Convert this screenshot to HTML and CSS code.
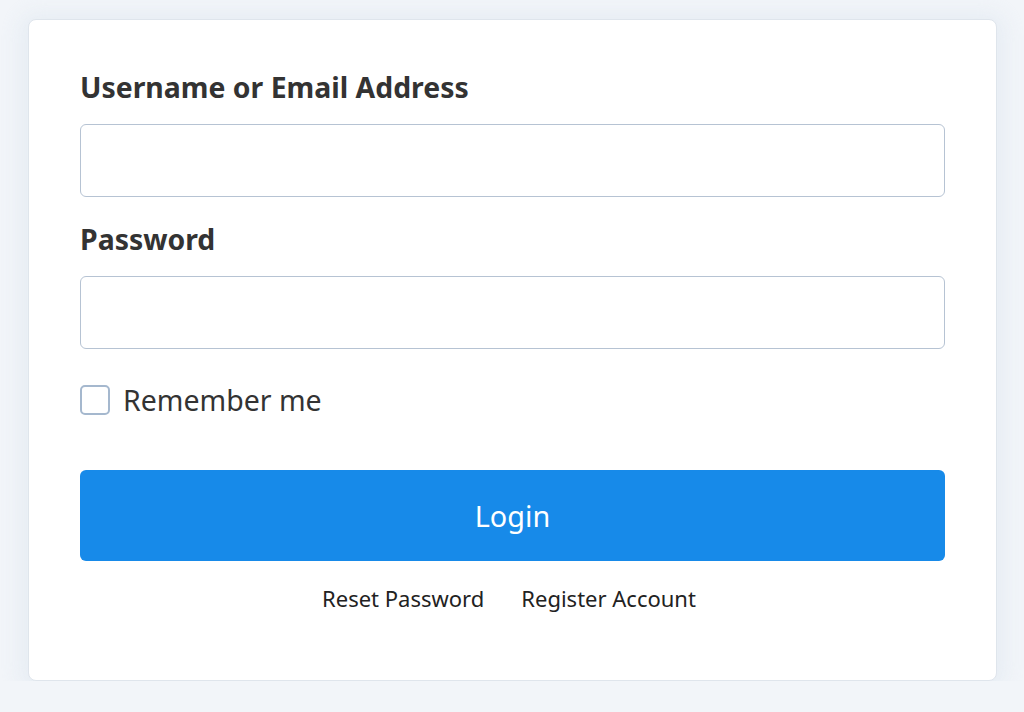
FILE: index.html
```html
<!DOCTYPE html>
<html lang="en">
<head>
    <meta charset="UTF-8">
    <meta name="viewport" content="width=device-width, initial-scale=1.0">
    <title>Log In</title>
    <link rel="stylesheet" href="styles.css">
</head>
<body>
    <div class="login-card">
        <form class="login-form" onsubmit="return false">
            <label class="field-label" for="user_login">Username or Email Address</label>
            <input class="text-input" type="text" id="user_login">

            <label class="field-label" for="user_pass">Password</label>
            <input class="text-input" type="password" id="user_pass">

            <label class="remember">
                <input type="checkbox" id="rememberme">
                <span>Remember me</span>
            </label>

            <button class="login-btn" type="submit">Login</button>
        </form>
        <div class="links">
            <a href="#">Reset Password</a>
            <a href="#">Register Account</a>
        </div>
    </div>
</body>
</html>
```

FILE: styles.css
```css
body {
    font-family: 'Noto Sans', 'Open Sans', sans-serif;
    background: #f2f5f9;
    color: #333;
    margin: 0;
    padding: 19px 27px 0 28px;
}
.login-card {
    background: #ffffff;
    border: 1px solid #dfe5ec;
    border-radius: 8px;
    box-shadow: 0 2px 20px 8px rgba(224, 231, 240, 0.6);
    padding: 48px 51px 67px 51px;
}
.login-form {
    display: flex;
    flex-direction: column;
}
.field-label {
    font-size: 28.4px;
    font-weight: bold;
    line-height: 39px;
    color: #333;
    margin-bottom: 17px;
}
.text-input {
    height: 73px;
    box-sizing: border-box;
    border: 1px solid #b6c3d3;
    border-radius: 6px;
    font-size: 26px;
    padding: 0 16px;
    margin-bottom: 23px;
    outline: none;
}
.remember {
    display: flex;
    align-items: center;
    gap: 13px;
    font-size: 28.5px;
    line-height: 36px;
    color: #333;
    margin-top: 10px;
    margin-bottom: 52px;
}
.remember input {
    appearance: none;
    width: 30px;
    height: 30px;
    margin: 0;
    border: 2px solid #a5b8ce;
    border-radius: 5px;
    box-sizing: border-box;
}
.login-btn {
    height: 91px;
    background: #178ae9;
    color: #fff;
    border: none;
    border-radius: 6px;
    font-family: inherit;
    font-size: 28.8px;
    cursor: pointer;
}
.links {
    display: flex;
    justify-content: center;
    gap: 37px;
    margin-top: 22px;
    padding-right: 7px;
}
.links a {
    font-size: 22px;
    color: #222;
    text-decoration: none;
}
```
